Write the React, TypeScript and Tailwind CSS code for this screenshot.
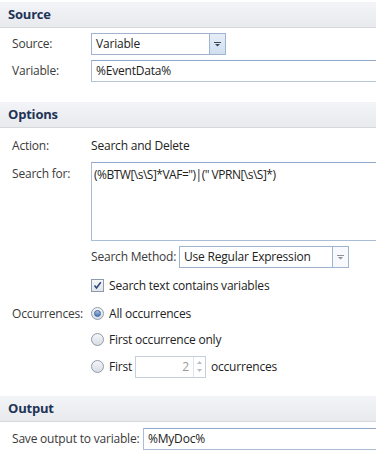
import type { ReactNode } from 'react'

function SectionHeader({ title }: { title: string }) {
  return (
    <div className="h-[26px] flex items-center pl-[8px] bg-gradient-to-b from-[#f3f4f7] to-[#e9eaee] border-b border-[#d6d7db]">
      <span className="text-[13px] font-bold text-[#1e3457]">{title}</span>
    </div>
  )
}

function Arrow({ color = '#4a4f5c' }: { color?: string }) {
  return (
    <svg width="7" height="5" viewBox="0 0 7 5">
      <rect x="0" y="0" width="7" height="1" fill={color} />
      <path d="M1 2 H6 L3.5 4.5 Z" fill={color} />
    </svg>
  )
}

function Dropdown({ value, width, active }: { value: string; width: string; active?: boolean }) {
  return (
    <div className={`flex h-[22px] border border-[#9fb3cf] bg-white ${width}`}>
      <div className="flex-1 flex items-center pl-[4px] text-[#222]">{value}</div>
      <div
        className={`w-[16px] flex items-center justify-center border-l border-[#9fb3cf] ${
          active ? 'bg-gradient-to-b from-[#e6eef8] to-[#cfdff0]' : 'bg-[#f7f9fc]'
        }`}
      >
        <Arrow color={active ? '#3f4556' : '#8a8f99'} />
      </div>
    </div>
  )
}

function TextBox({ value, className = '' }: { value: string; className?: string }) {
  return (
    <div
      className={`h-[22px] flex items-center pl-[4px] border border-[#abbdd6] border-t-[#8fa7c8] bg-white text-[#222] ${className}`}
    >
      {value}
    </div>
  )
}

function Row({ label, children, className = '' }: { label: string; children: ReactNode; className?: string }) {
  return (
    <div className={`flex items-center ${className}`}>
      <div className="w-[91px] shrink-0 pl-[12px] text-[#3a3a3a]">{label}</div>
      <div className="flex-1 min-w-0">{children}</div>
    </div>
  )
}

function Radio({ checked }: { checked?: boolean }) {
  return (
    <span className="w-[13px] h-[13px] rounded-full border border-[#8e9aab] bg-gradient-to-b from-[#f4f5f7] to-[#d9dde3] flex items-center justify-center shrink-0">
      {checked && (
        <span className="w-[7px] h-[7px] rounded-full bg-gradient-to-b from-[#a8c4e6] to-[#4a78b4] border border-[#3c64a0]" />
      )}
    </span>
  )
}

export default function App() {
  return (
    <div className="w-[376px] h-[460px] overflow-hidden bg-white text-[12px] leading-none text-[#333] font-['Open_Sans',sans-serif] tracking-[-0.2px]">
      <div className="pt-[2px]">
        <SectionHeader title="Source" />
        <Row label="Source:" className="mt-[5px]">
          <Dropdown value="Variable" width="w-[135px]" active />
        </Row>
        <Row label="Variable:" className="mt-[5px]">
          <TextBox value="%EventData%" className="mr-[-10px] border-b-[#b9c6d8]" />
        </Row>
      </div>

      <div className="mt-[20px]">
        <SectionHeader title="Options" />
        <Row label="Action:" className="mt-[10px] h-[16px]">
          <span className="text-[#222]">Search and Delete</span>
        </Row>
        <div className="flex mt-[8px]">
          <div className="w-[91px] shrink-0 pl-[12px] pt-[6px] text-[#3a3a3a]">Search for:</div>
          <div className="flex-1 h-[79px] border border-[#abbdd6] border-t-[#8fa7c8] pl-[2px] pt-[6px] text-[#222] mr-[-10px] tracking-[-0.5px]">
            (%BTW[\s\S]*VAF=")|(" VPRN[\s\S]*)
          </div>
        </div>
        <div className="flex items-center mt-[5px] pl-[91px]">
          <span className="w-[88px] text-[#3a3a3a]">Search Method:</span>
          <Dropdown value="Use Regular Expression" width="w-[170px]" />
        </div>
        <div className="flex items-center mt-[11px] pl-[91px] h-[13px]">
          <span className="w-[13px] h-[13px] border border-[#8e9aab] bg-gradient-to-b from-[#f6f7f9] to-[#e2e5ea] flex items-center justify-center">
            <svg width="9" height="9" viewBox="0 0 9 9">
              <path d="M1.5 4.5 L3.5 7 L7.8 1.2" stroke="#2d4a7a" strokeWidth="1.6" fill="none" />
            </svg>
          </span>
          <span className="ml-[5px] text-[#222]">Search text contains variables</span>
        </div>

        <div className="flex mt-[15px]">
          <div className="w-[91px] shrink-0 pl-[12px] text-[#3a3a3a] pt-[1px]">Occurrences:</div>
          <div className="flex flex-col">
            <div className="flex items-center h-[13px] gap-[5px]">
              <Radio checked />
              <span className="text-[#222]">All occurrences</span>
            </div>
            <div className="flex items-center h-[13px] gap-[5px] mt-[13px]">
              <Radio />
              <span className="text-[#222]">First occurrence only</span>
            </div>
            <div className="flex items-center h-[13px] gap-[5px] mt-[14px]">
              <Radio />
              <span className="w-[21px] whitespace-nowrap text-[#222]">First</span>
              <div className="flex h-[22px] w-[71px] border border-[#c6cfdb] bg-white">
                <div className="flex-1 flex items-center justify-end pr-[4px] text-[#9a9a9a]">2</div>
                <div className="w-[12px] flex flex-col items-center justify-center gap-[5px] border-l border-[#dde3ea]">
                  <svg width="5" height="3" viewBox="0 0 5 3">
                    <path d="M0 3 L2.5 0 L5 3 Z" fill="#b8bec8" />
                  </svg>
                  <svg width="5" height="3" viewBox="0 0 5 3">
                    <path d="M0 0 L2.5 3 L5 0 Z" fill="#b8bec8" />
                  </svg>
                </div>
              </div>
              <span className="text-[#222]">occurrences</span>
            </div>
          </div>
        </div>
      </div>

      <div className="mt-[23px]">
        <SectionHeader title="Output" />
        <div className="flex items-center mt-[6px]">
          <span className="w-[143px] shrink-0 pl-[12px] text-[#3a3a3a]">Save output to variable:</span>
          <TextBox value="%MyDoc%" className="flex-1 mr-[-10px]" />
        </div>
      </div>
    </div>
  )
}
